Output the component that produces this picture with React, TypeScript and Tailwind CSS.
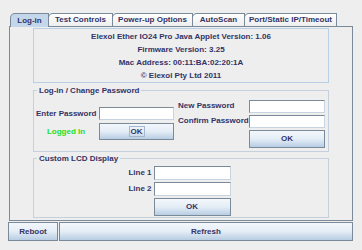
import React from 'react'

// Java Metal / Ocean look
const TABS = [
  { label: 'Log-in', w: 'w-[39px]', active: true },
  { label: 'Test Controls', w: 'w-[65px]', active: false },
  { label: 'Power-up Options', w: 'w-[81px]', active: false },
  { label: 'AutoScan', w: 'w-[53px]', active: false },
  { label: 'Port/Static IP/Timeout', w: 'w-[93px]', active: false },
]

function Button({ children, className = '', focus = false }: { children: React.ReactNode; className?: string; focus?: boolean }) {
  return (
    <button
      className={
        'flex items-center justify-center border border-[#7a8a99] bg-gradient-to-b from-[#f3f7fb] via-[#e4edf6] to-[#b7cde3] text-[#333366] font-bold ' +
        className
      }
    >
      <span className={focus ? 'border border-[#a3b8cc] px-[1px] leading-[9px]' : ''}>{children}</span>
    </button>
  )
}

function Field({ className = '' }: { className?: string }) {
  return <div className={'bg-white border border-[#7a8a99] border-b-[#c8d4e0] border-r-[#c8d4e0] ' + className} />
}

export default function App() {
  return (
    <div className="w-[362px] h-[250px] bg-[#eeeeee] pt-[13px] pl-[9px] font-['Liberation_Sans',Arial,sans-serif] font-bold text-[8px] text-[#333366] leading-none">
      <div className="w-[344px]">
        {/* tabs */}
        <div className="flex h-[13px] pl-[1px]">
          {TABS.map((t) => (
            <div
              key={t.label}
              className={
                t.w +
                ' -mr-[1px] flex items-center justify-center rounded-tl-[5px] border-t border-l border-r border-[#7a8a99] ' +
                (t.active
                  ? 'relative z-10 h-[14px] bg-[#c4d7ea]'
                  : 'h-[13px] bg-gradient-to-b from-[#ffffff] to-[#eeeeee]')
              }
            >
              {t.label}
            </div>
          ))}
        </div>

        {/* panel */}
        <div className="h-[195px] border border-[#7a8a99] px-[23px] pt-[1px]">
          <div className="h-[55px] border border-[#b8cfe5] flex flex-col items-center justify-center leading-[13px]">
            <div>Elexol Ether IO24 Pro Java Applet Version: 1.06</div>
            <div>Firmware Version: 3.25</div>
            <div>Mac Address: 00:11:BA:02:20:1A</div>
            <div>© Elexol Pty Ltd 2011</div>
          </div>

          <fieldset className="mt-[2px] h-[67px] border border-[#c4d0dc] px-[2px] flex items-center">
            <legend className="ml-[1px] px-[2px] leading-[11px]">Log-in / Change Password</legend>
            <div className="flex items-center gap-[4px] w-full">
              <div className="grid grid-cols-[60px_75px] gap-x-[3px] gap-y-[3px] items-center">
                <div className="text-right whitespace-nowrap">Enter Password</div>
                <Field className="h-[13px]" />
                <div className="text-center text-[#22e022]">Logged In</div>
                <Button className="h-[17px]" focus>OK</Button>
              </div>
              <div className="grid grid-cols-[71px_76px] gap-y-[2px] items-center">
                <div className="whitespace-nowrap">New Password</div>
                <Field className="h-[13px]" />
                <div className="whitespace-nowrap">Confirm Password</div>
                <Field className="h-[13px]" />
                <div />
                <Button className="h-[18px]">OK</Button>
              </div>
            </div>
          </fieldset>

          <fieldset className="mt-[1px] h-[65px] border border-[#c4d0dc] px-[2px] flex items-center">
            <legend className="ml-[1px] px-[2px] leading-[11px]">Custom LCD Display</legend>
            <div className="w-full flex justify-center pr-[3px]">
              <div className="grid grid-cols-[auto_77px] gap-x-[2px] gap-y-[2px] items-center">
                <div className="text-right">Line 1</div>
                <Field className="h-[14px]" />
                <div className="text-right">Line 2</div>
                <Field className="h-[14px]" />
                <div />
                <Button className="h-[18px]">OK</Button>
              </div>
            </div>
          </fieldset>
        </div>
      </div>

      {/* bottom buttons */}
      <div className="mt-[1px] flex gap-[1px] w-[345px] -ml-[1px]">
        <Button className="w-[50px] h-[19px]">Reboot</Button>
        <Button className="flex-1 h-[19px]">Refresh</Button>
      </div>
    </div>
  )
}
